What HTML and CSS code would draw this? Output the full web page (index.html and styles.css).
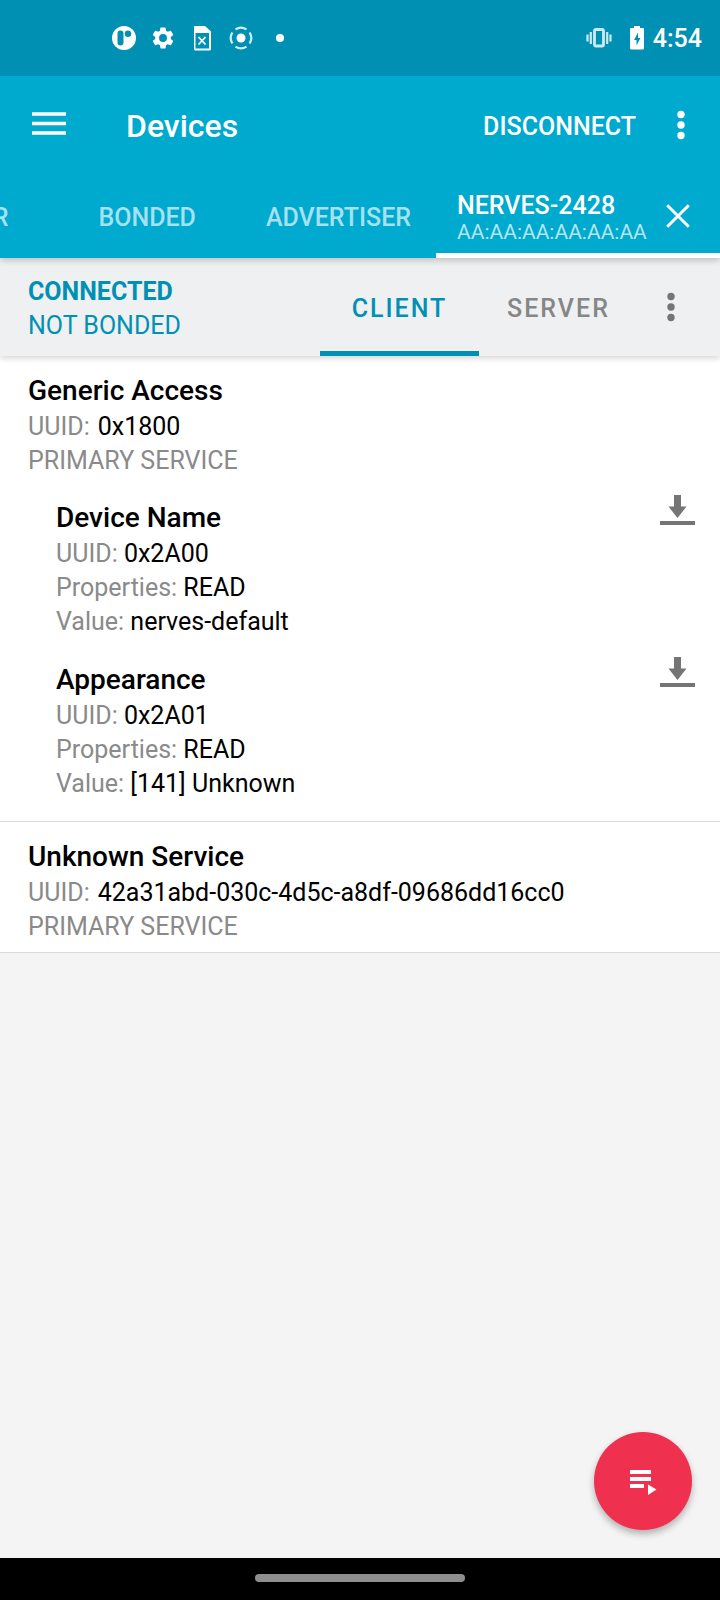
FILE: index.html
```html
<!DOCTYPE html>
<html lang="en">
<head>
<meta charset="utf-8">
<meta name="viewport" content="width=device-width, initial-scale=1">
<title>Devices</title>
<link rel="stylesheet" href="styles.css">
</head>
<body>
<div class="status-bar">
  <div class="status-left">
    <svg class="status-icon" viewBox="0 0 24 24"><path fill="#fff" fill-rule="evenodd" d="M12 0a12 12 0 1 1 0 24a12 12 0 0 1 0-24zM8.500 4.500h0a3 3 0 0 0-3 3v9a3 3 0 0 0 6 0v-9a3 3 0 0 0-3-3zM16 4.500a3.200 3.200 0 1 0 0 6.400a3.200 3.200 0 0 0 0-6.400z"/></svg>
    <svg class="status-icon" viewBox="1 1 22 22"><path fill="#fff" d="M19.140 12.940c.04-.3.06-.61.06-.94 0-.32-.02-.64-.07-.94l2.030-1.580c.18-.14.23-.41.12-.61l-1.920-3.320c-.12-.22-.37-.29-.59-.22l-2.390.96c-.5-.38-1.030-.7-1.620-.94l-.36-2.540c-.04-.24-.24-.41-.48-.41h-3.840c-.24 0-.43.17-.47.41l-.36 2.540c-.59.24-1.130.57-1.620.94l-2.390-.96c-.22-.08-.47 0-.59.22L2.740 8.870c-.12.21-.08.47.12.61l2.030 1.580c-.05.3-.09.63-.09.94s.02.64.07.94l-2.030 1.580c-.18.14-.23.41-.12.61l1.920 3.320c.12.22.37.29.59.22l2.390-.96c.5.38 1.030.7 1.620.94l.36 2.540c.05.24.24.41.48.41h3.840c.24 0 .44-.17.47-.41l.36-2.540c.59-.24 1.130-.56 1.620-.94l2.390.96c.22.08.47 0 .59-.22l1.920-3.320c.12-.22.07-.47-.12-.61l-2.010-1.580zM12 15.600A3.600 3.600 0 1 1 12 8.400a3.600 3.600 0 0 1 0 7.200z"/></svg>
    <svg class="status-icon" viewBox="0 0 24 24"><path fill="#fff" fill-rule="evenodd" d="M5 0h10l6 5.500V23a1.500 1.500 0 0 1-1.500 1.500h-14A1.500 1.500 0 0 1 4 23V1a1 1 0 0 1 1-1zM5.500 7v15.500h13.500V7z"/><path d="M8.500 11l7 7.500M15.500 11l-7 7.500" stroke="#fff" stroke-width="1.800"/></svg>
    <svg class="status-icon" viewBox="0 0 24 24" fill="none" stroke="#d5edf4" stroke-width="2.200"><circle cx="12" cy="12" r="4.500" fill="#fff" stroke="none"/><path d="M6.500 3.400a10.200 10.200 0 0 1 11 0M6.500 20.600a10.200 10.200 0 0 0 11 0M3.400 6.500a10.200 10.200 0 0 0 0 11M20.600 6.500a10.200 10.200 0 0 1 0 11"/></svg>
    <svg class="status-icon" viewBox="0 0 24 24"><circle cx="12" cy="12" r="4" fill="#fff"/></svg>
  </div>
  <div class="status-right">
    <svg class="vibrate-icon" viewBox="0 0 26 24" fill="none" stroke="#cdeaf2" stroke-width="2.200"><rect x="8.500" y="3.500" width="9" height="16.500" rx="1.500" stroke-width="2.800"/><path d="M4.800 6v12M21.200 6v12M1.500 8.500v7M24.500 8.500v7"/></svg>
    <svg class="battery-icon" viewBox="0 0 14 24"><path fill="#fff" fill-rule="evenodd" d="M4 0h6v2h3a1 1 0 0 1 1 1v19a1.500 1.500 0 0 1-1.500 1.500h-11A1.500 1.500 0 0 1 0 22V3a1 1 0 0 1 1-1h3zM8 6.500L4 14h2.500v5.500L10.500 12H8z"/></svg>
    <span class="clock">4:54</span>
  </div>
</div>

<header class="app-header">
  <div class="app-bar">
    <button class="icon-button menu-button" aria-label="Open menu"><svg class="menu-icon" viewBox="0 0 34 24"><path d="M0 2h34M0 11.500h34M0 21h34" stroke="#fff" stroke-width="3.500"/></svg></button>
    <h1 class="app-title">Devices</h1>
    <button class="disconnect">DISCONNECT</button>
    <button class="icon-button" aria-label="More options"><svg class="dots-icon" viewBox="0 0 8 28" fill="currentColor"><circle cx="4" cy="3.500" r="3.700"/><circle cx="4" cy="14" r="3.700"/><circle cx="4" cy="24.500" r="3.700"/></svg></button>
  </div>
  <nav class="tabs">
    <button class="tab">SCANNER</button>
    <button class="tab">BONDED</button>
    <button class="tab tab-advertiser">ADVERTISER</button>
    <div class="tab-active">
      <button class="device-tab"><span class="device-name">NERVES-2428</span><span class="device-address">AA:AA:AA:AA:AA:AA</span></button>
      <button class="icon-button" aria-label="Close tab"><svg class="close-icon" viewBox="0 0 24 24"><path d="M1.200 1.200l21.600 21.600M22.800 1.200L1.200 22.800" stroke="#fff" stroke-width="3"/></svg></button>
    </div>
  </nav>
</header>

<section class="connection-bar">
  <div class="connection-state">
    <strong class="connected">CONNECTED</strong>
    <span>NOT BONDED</span>
  </div>
  <button class="mode mode-selected">CLIENT</button>
  <button class="mode">SERVER</button>
  <button class="icon-button mode-menu" aria-label="Connection options"><svg class="dots-icon" viewBox="0 0 8 28" fill="currentColor"><circle cx="4" cy="3.500" r="3.700"/><circle cx="4" cy="14" r="3.700"/><circle cx="4" cy="24.500" r="3.700"/></svg></button>
</section>

<main class="content">
  <section class="service service-open">
    <div class="service-header">
      <h2 class="item-title">Generic Access</h2>
      <p class="line service-uuid"><span class="label">UUID:</span><span>0x1800</span></p>
      <p class="line label">PRIMARY SERVICE</p>
    </div>
    <article class="characteristic">
      <div>
        <h3 class="item-title">Device Name</h3>
        <p class="line"><span class="label">UUID:</span> 0x2A00</p>
        <p class="line"><span class="label">Properties:</span> READ</p>
        <p class="line"><span class="label">Value:</span> nerves-default</p>
      </div>
      <button class="icon-button" aria-label="Read Device Name"><svg class="read-icon" viewBox="0 0 35 30" fill="#757575"><path d="M14 0h7v11.500h5.500L17.500 23 8.500 11.500H14zM0 26h35v4H0z"/></svg></button>
    </article>
    <article class="characteristic">
      <div>
        <h3 class="item-title">Appearance</h3>
        <p class="line"><span class="label">UUID:</span> 0x2A01</p>
        <p class="line"><span class="label">Properties:</span> READ</p>
        <p class="line"><span class="label">Value:</span> [141] Unknown</p>
      </div>
      <button class="icon-button" aria-label="Read Appearance"><svg class="read-icon" viewBox="0 0 35 30" fill="#757575"><path d="M14 0h7v11.500h5.500L17.500 23 8.500 11.500H14zM0 26h35v4H0z"/></svg></button>
    </article>
  </section>
  <section class="service">
    <div class="service-header">
      <h2 class="item-title">Unknown Service</h2>
      <p class="line service-uuid"><span class="label">UUID:</span><span>42a31abd-030c-4d5c-a8df-09686dd16cc0</span></p>
      <p class="line label">PRIMARY SERVICE</p>
    </div>
  </section>
  <button class="fab" aria-label="Run macro"><svg class="macro-icon" viewBox="0 0 26 26" fill="#fff"><path d="M0 0h21v4H0zM0 7h21v4H0zM0 14h14v4H0zM18 14.500l8.500 5-8.500 5.500z"/></svg></button>
</main>

<footer class="nav-bar"><div class="nav-handle"></div></footer>
</body>
</html>
```

FILE: styles.css
```css
* { box-sizing: border-box; }

body {
  margin: 0;
  min-height: 100vh;
  display: flex;
  flex-direction: column;
  background: #f4f4f4;
  color: #000;
  font-family: Roboto, "Liberation Sans", sans-serif;
  font-size: 25px;
  line-height: 34px;
}

h1, h2, h3, p { margin: 0; }

button {
  margin: 0;
  padding: 0;
  border: 0;
  background: none;
  color: inherit;
  font: inherit;
  cursor: pointer;
}

svg { display: block; overflow: visible; }

.status-bar {
  position: relative;
  z-index: 3;
  height: 76px;
  padding: 0 18px 0 112px;
  display: flex;
  align-items: center;
  justify-content: space-between;
  background: #0090b4;
  color: #fff;
}

.status-left { display: flex; gap: 15px; }
.status-icon { width: 24px; height: 24px; }
.status-right { display: flex; align-items: center; }
.vibrate-icon { width: 26px; height: 24px; margin-right: 18px; }
.battery-icon { width: 14px; height: 24px; margin-right: 9px; }
.clock { padding-top: 2px; font-weight: 500; }

.app-header {
  position: relative;
  z-index: 2;
  background: #00a9ce;
  color: #fff;
  box-shadow: 0 2px 7px rgba(0, 0, 0, 0.22);
}

.app-bar {
  height: 98px;
  padding: 0 35px 0 32px;
  display: flex;
  align-items: center;
}

.icon-button { flex: none; }
.menu-button { padding-bottom: 3px; }
.menu-icon { width: 34px; height: 24px; }
.app-title { flex: 1; margin-left: 60px; padding-top: 2px; font-size: 32px; font-weight: 500; }
.disconnect { margin-right: 41px; padding-top: 4px; font-weight: 500; }
.dots-icon { width: 8px; height: 28px; }

.tabs {
  height: 84px;
  display: flex;
  justify-content: flex-end;
  overflow: hidden;
}

.tab { flex: none; padding: 4px 45px 0; font-weight: 500; color: #a6e1ef; }
.tab-advertiser { padding: 4px 25px 0; }

.tab-active {
  flex: none;
  width: 284px;
  padding: 4px 30px 0 21px;
  display: flex;
  align-items: center;
  justify-content: space-between;
  border-bottom: 5px solid #fff;
}

.device-tab {
  padding-top: 4px;
  display: flex;
  flex-direction: column;
  align-items: flex-start;
}

.device-name { font-weight: 500; line-height: 28px; }
.device-address { font-size: 21px; line-height: 24px; color: #b3e5f0; }
.close-icon { width: 24px; height: 24px; }

.connection-bar {
  position: relative;
  z-index: 1;
  height: 98px;
  padding: 0 45px 0 28px;
  display: flex;
  align-items: stretch;
  background: #eff0f2;
  color: #0090b4;
  box-shadow: 0 2px 6px rgba(0, 0, 0, 0.18);
}

.connection-state {
  flex: 1;
  padding-top: 4px;
  display: flex;
  flex-direction: column;
  justify-content: center;
}

.connected { font-weight: 700; }

.mode {
  width: 159px;
  padding-top: 9px;
  border-bottom: 5px solid transparent;
  color: #868686;
  font-weight: 500;
  letter-spacing: 2px;
}

.mode-selected { border-color: #0090b4; color: #0090b4; }
.mode-menu { margin-left: 29px; color: #757575; }

.content { position: relative; flex: 1; }
.service { background: #fff; border-bottom: 1px solid #d9dbdc; }
.service-open { padding-bottom: 11px; }
.service-header { padding: 16px 28px 8px; }
.item-title { font-size: 28px; font-weight: 500; line-height: 38px; }
.label { color: #8a8a8a; }
.service-uuid { display: flex; gap: 8px; }

.characteristic {
  padding: 9px 25px 9px 56px;
  display: flex;
  justify-content: space-between;
  align-items: flex-start;
}

.characteristic .item-title { padding-top: 4px; }
.read-icon { width: 35px; height: 30px; }

.fab {
  position: absolute;
  right: 28px;
  bottom: 28px;
  width: 98px;
  height: 98px;
  padding-top: 3px;
  display: flex;
  align-items: center;
  justify-content: center;
  border-radius: 50%;
  background: #ef304e;
  box-shadow: 0 4px 7px rgba(0, 0, 0, 0.28);
}

.macro-icon { width: 26px; height: 26px; }

.nav-bar {
  height: 42px;
  padding-bottom: 2px;
  display: flex;
  align-items: center;
  justify-content: center;
  background: #000;
}

.nav-handle { width: 210px; height: 8px; border-radius: 4px; background: #8e8e8e; }
```
